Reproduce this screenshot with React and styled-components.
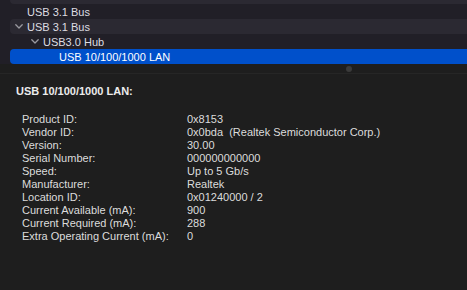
import { Fragment } from "react";
import styled, { createGlobalStyle } from "styled-components";

const GlobalStyle = createGlobalStyle`
  html, body {
    margin: 0;
    padding: 0;
    background: #1e1e1e;
  }
  body {
    font-family: "Liberation Sans", Arial, sans-serif;
    font-size: 11px;
    color: #dcdcdc;
  }
`;

const Window = styled.div`
  width: 467px;
  height: 290px;
  overflow: hidden;
  display: flex;
  flex-direction: column;
  background: #1e1e1e;
`;

const TreeArea = styled.div`
  height: 64px;
  overflow: hidden;
  background: #211f27;
`;

const TreeScroll = styled.div`
  margin-top: -11px;
`;

const Row = styled.div`
  height: 15px;
  margin-left: 10px;
  padding-left: ${(p) => 5 + p.$depth * 16}px;
  display: flex;
  align-items: center;
  border-radius: 4px 0 0 4px;
  background: ${(p) =>
    p.$selected ? "#0050cb" : p.$alt ? "#2b2932" : "transparent"};
  color: ${(p) => (p.$selected ? "#ffffff" : "#dedde2")};
  white-space: nowrap;
`;

const Twisty = styled.span`
  width: 12px;
  height: 15px;
  flex: none;
  display: flex;
  align-items: center;
`;

const Splitter = styled.div`
  height: 9px;
  border-bottom: 1px solid #262626;
  display: flex;
  align-items: center;
  padding-left: 346px;
`;

const Grip = styled.div`
  width: 6px;
  height: 6px;
  border-radius: 50%;
  background: #3b3b3b;
`;

const Detail = styled.div`
  flex: 1;
  padding: 11px 16px 0 16px;
`;

const Heading = styled.div`
  font-weight: bold;
  color: #ececec;
  line-height: 13px;
  margin-bottom: 15px;
`;

const PropList = styled.div`
  display: grid;
  grid-template-columns: 165px auto;
  padding-left: 6px;
  line-height: 13px;
  color: #dcdcdc;
`;

const Value = styled.span`
  white-space: pre;
`;

const Chevron = () => (
  <svg width="8" height="5" viewBox="0 0 8 5">
    <path
      d="M0.8 0.8 L4 4 L7.2 0.8"
      fill="none"
      stroke="#9a99a0"
      strokeWidth="1.3"
      strokeLinecap="round"
      strokeLinejoin="round"
    />
  </svg>
);

// first row is scrolled almost out of view, its label is not visible
const tree = [
  { label: "", depth: 0, alt: true },
  { label: "USB 3.1 Bus", depth: 0 },
  { label: "USB 3.1 Bus", depth: 0, open: true, alt: true },
  { label: "USB3.0 Hub", depth: 1, open: true },
  { label: "USB 10/100/1000 LAN", depth: 2, selected: true },
];

const props = [
  ["Product ID:", "0x8153"],
  ["Vendor ID:", "0x0bda  (Realtek Semiconductor Corp.)"],
  ["Version:", "30.00"],
  ["Serial Number:", "000000000000"],
  ["Speed:", "Up to 5 Gb/s"],
  ["Manufacturer:", "Realtek"],
  ["Location ID:", "0x01240000 / 2"],
  ["Current Available (mA):", "900"],
  ["Current Required (mA):", "288"],
  ["Extra Operating Current (mA):", "0"],
];

export default function App() {
  return (
    <>
      <GlobalStyle />
      <Window>
        <TreeArea>
          <TreeScroll>
            {tree.map((r, i) => (
              <Row key={i} $depth={r.depth} $alt={r.alt} $selected={r.selected}>
                <Twisty>{r.open && <Chevron />}</Twisty>
                {r.label}
              </Row>
            ))}
          </TreeScroll>
        </TreeArea>
        <Splitter>
          <Grip />
        </Splitter>
        <Detail>
          <Heading>USB 10/100/1000 LAN:</Heading>
          <PropList>
            {props.map(([k, v]) => (
              <Fragment key={k}>
                <span>{k}</span>
                <Value>{v}</Value>
              </Fragment>
            ))}
          </PropList>
        </Detail>
      </Window>
    </>
  );
}
